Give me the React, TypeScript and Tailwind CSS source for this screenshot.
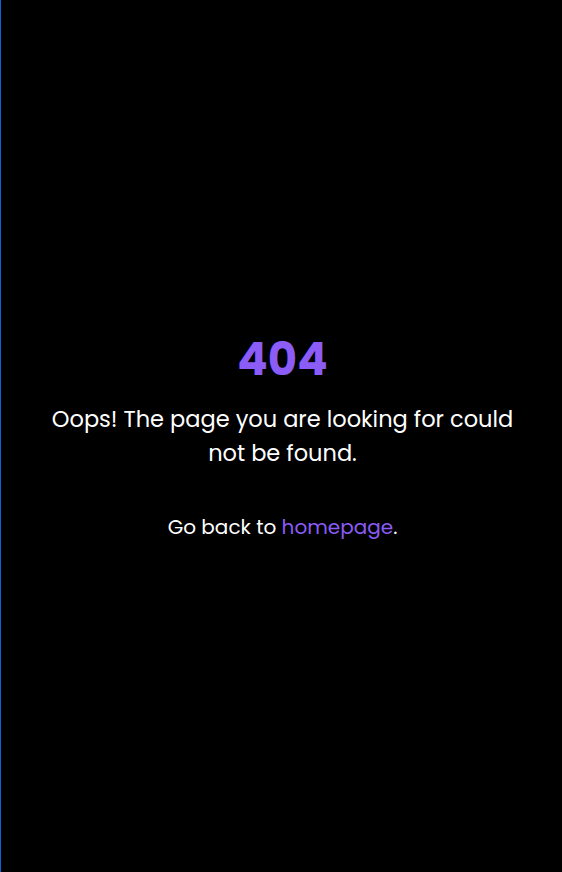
export default function App() {
  return (
    <div className="flex min-h-screen items-center justify-center border-l border-[#0a62d0] bg-black pt-[2px] pr-10 pl-[42px] text-center font-['Poppins','DejaVu_Sans',sans-serif] text-white">
      <div>
        <h1 className="text-[45px] leading-[56px] font-bold text-[#8b5cf6]">404</h1>
        <p className="mt-[14px] text-[22.5px] leading-[34px]">
          Oops! The page you are looking for could not be found.
        </p>
        <p className="mt-[41px] text-[20px] leading-[32px]">
          Go back to{" "}
          <a href="#" className="text-[#8b5cf6]">
            homepage
          </a>
          .
        </p>
      </div>
    </div>
  );
}
